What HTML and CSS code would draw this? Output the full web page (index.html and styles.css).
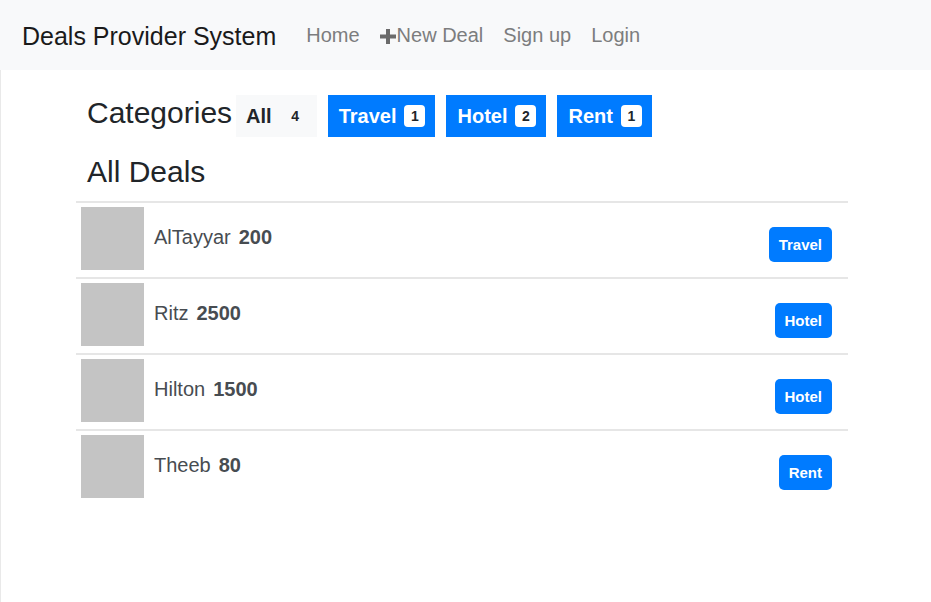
FILE: index.html
```html
<!DOCTYPE html>
<html lang="en">
<head>
<meta charset="utf-8">
<title>Deals Provider System</title>
<link rel="stylesheet" href="styles.css">
</head>
<body>
<nav class="navbar">
  <a class="brand" href="#">Deals Provider System</a>
  <ul class="nav">
    <li><a class="nav-link" href="#">Home</a></li>
    <li><a class="nav-link" href="#"><svg class="plus" width="16" height="15" viewBox="0 0 16 15" aria-hidden="true"><rect x="6" y="0" width="4" height="15" fill="#6b6b6b"/><rect x="0" y="5.5" width="16" height="4" fill="#6b6b6b"/></svg>New Deal</a></li>
    <li><a class="nav-link" href="#">Sign up</a></li>
    <li><a class="nav-link" href="#">Login</a></li>
  </ul>
</nav>
<main class="page">
  <div class="content">
    <div class="categories">
      <h3 class="heading">Categories</h3>
      <a class="btn btn-light" href="#">All <span class="badge badge-light">4</span></a>
      <a class="btn btn-primary" href="#">Travel <span class="badge">1</span></a>
      <a class="btn btn-primary" href="#">Hotel <span class="badge">2</span></a>
      <a class="btn btn-primary" href="#">Rent <span class="badge">1</span></a>
    </div>
    <h3 class="heading title">All Deals</h3>
    <ul class="deals">
      <li class="deal"><div class="thumb"></div><div class="info">AlTayyar<b>200</b></div><span class="tag">Travel</span></li>
      <li class="deal"><div class="thumb"></div><div class="info">Ritz<b>2500</b></div><span class="tag">Hotel</span></li>
      <li class="deal"><div class="thumb"></div><div class="info">Hilton<b>1500</b></div><span class="tag">Hotel</span></li>
      <li class="deal"><div class="thumb"></div><div class="info">Theeb<b>80</b></div><span class="tag">Rent</span></li>
    </ul>
  </div>
</main>
</body>
</html>
```

FILE: styles.css
```css
* { box-sizing: border-box; }

html, body {
  margin: 0;
  padding: 0;
  background: #fff;
}

body {
  font-family: "Liberation Sans", Arial, sans-serif;
  font-size: 20px;
  line-height: 1.5;
  color: #212529;
}

a { text-decoration: none; }

.navbar {
  display: flex;
  align-items: center;
  height: 70px;
  padding: 0 22px;
  background: #f8f9fa;
}

.brand {
  font-size: 25px;
  line-height: 38px;
  color: #1a1a1a;
  margin-right: 20px;
  padding-top: 1px;
}

.nav {
  display: flex;
  list-style: none;
  margin: 0;
  padding: 0;
}

.nav-link {
  display: block;
  padding: 0 10px;
  line-height: 30px;
  color: #7c7d7e;
}

.plus {
  vertical-align: -2px;
  margin-right: 1px;
}

.page {
  border-left: 1px solid #e9e9e9;
  min-height: calc(100vh - 70px);
  padding-top: 25px;
}

.content {
  width: 847px;
  padding-left: 75px;
}

.categories {
  display: flex;
  align-items: baseline;
  padding-left: 11px;
}

.heading {
  margin: 0;
  font-size: 30px;
  font-weight: normal;
  line-height: 36px;
  color: #212529;
}

.categories .heading {
  margin-right: 4px;
}

.btn {
  display: inline-flex;
  align-items: center;
  height: 42px;
  padding: 0 10px 0 11px;
  font-weight: bold;
  font-size: 20px;
  line-height: 30px;
  margin-right: 11px;
}

.btn-light {
  background: #f8f9fa;
  color: #212529;
  padding: 0 11px 0 10px;
}

.btn-primary {
  background: #007bff;
  color: #fff;
}

.badge {
  display: inline-block;
  width: 21px;
  height: 22px;
  margin-left: 8px;
  border-radius: 4px;
  background: #fff;
  color: #212529;
  font-size: 14px;
  line-height: 22px;
  text-align: center;
  font-weight: bold;
}

.badge-light {
  background: #f8f9fa;
  margin-left: 13px;
}

.title {
  margin-top: 17px;
  margin-left: 11px;
  margin-bottom: 11px;
}

.deals {
  list-style: none;
  margin: 0;
  padding: 0;
}

.deal {
  display: flex;
  align-items: flex-start;
  border-top: 2px solid #e6e6e6;
  padding: 4px 16px 7px 5px;
}

.thumb {
  width: 63px;
  height: 63px;
  background: #c4c4c4;
  flex: none;
}

.info {
  margin-left: 10px;
  margin-top: 15px;
  line-height: 30px;
  font-size: 20px;
  color: #474c51;
}

.info b {
  margin-left: 8px;
}

.tag {
  margin-left: auto;
  margin-top: 20px;
  height: 35px;
  line-height: 35px;
  padding: 0 10px;
  border-radius: 5px;
  background: #007bff;
  color: #fff;
  font-size: 15px;
  font-weight: bold;
}
```
